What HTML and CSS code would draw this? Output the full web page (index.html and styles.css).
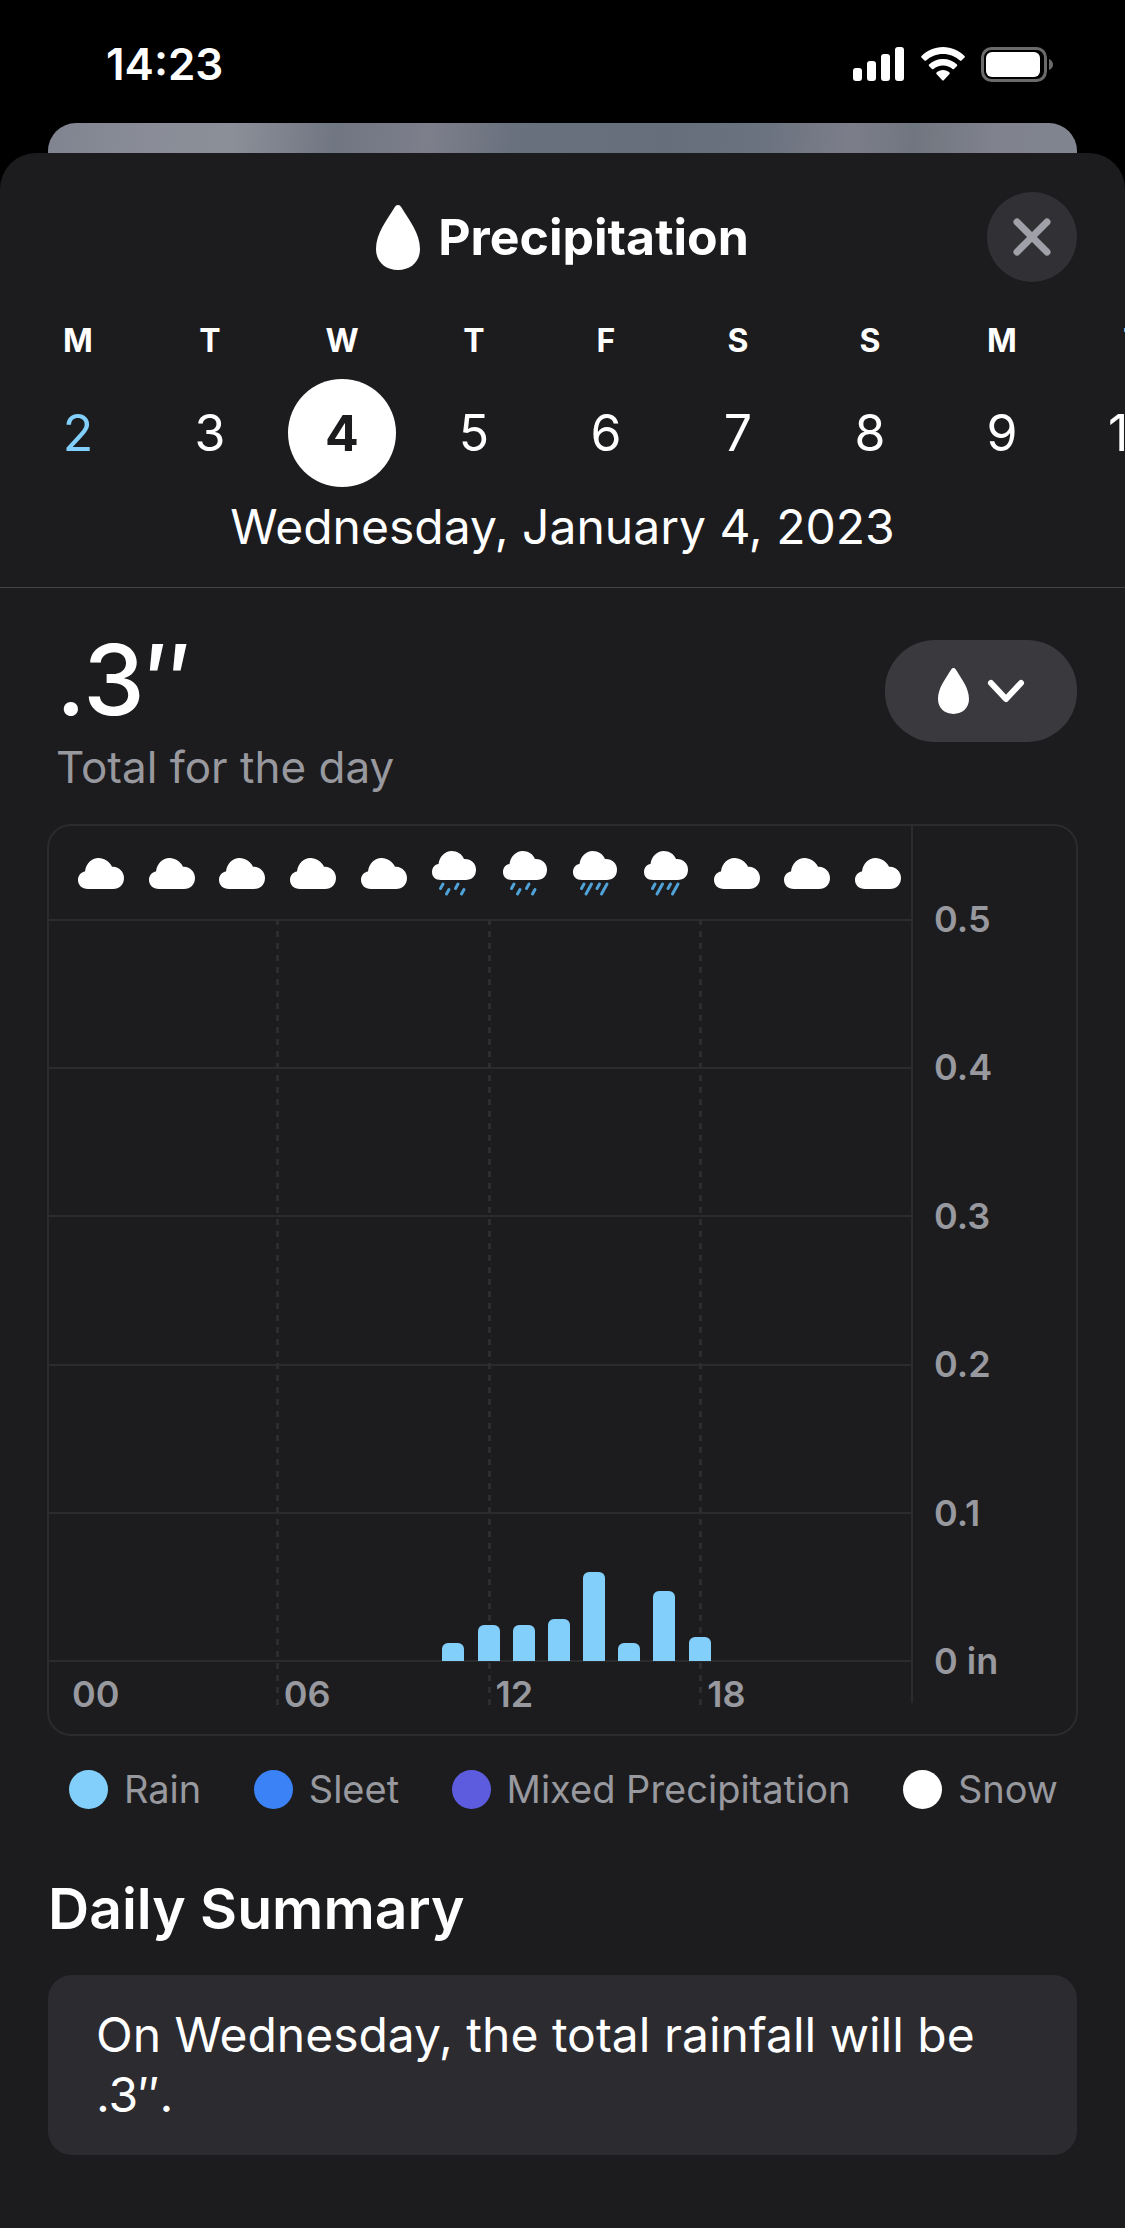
FILE: index.html
```html
<!DOCTYPE html>
<html lang="en">
<head>
    <meta charset="UTF-8">
    <meta name="viewport" content="width=device-width, initial-scale=1.0">
    <title>Precipitation</title>
    <link rel="stylesheet" href="styles.css">
</head>
<body>

<!-- shared icon shapes -->
<svg class="icon-defs" width="0" height="0" aria-hidden="true">
    <symbol id="drop" viewBox="0 0 44 65">
        <path d="M22 0 C23.500 0 24.500 0.800 25.500 2.500 C33 15 44 28 44 44 C44 56.500 35 65 22 65 C9 65 0 56.500 0 44 C0 28 11 15 18.500 2.500 C19.500 0.800 20.500 0 22 0 Z"/>
    </symbol>
    <symbol id="cloud" viewBox="0 0 46 31">
        <path d="M10 31 C4 31 0 27 0 22 C0 17.500 3 14 7 13.500 C8 5.500 13.500 0 20.500 0 C26.500 0 31.500 3.500 34 8.700 C40.500 8 46 13.500 46 20 C46 26.500 41.500 31 35 31 Z"/>
    </symbol>
    <symbol id="rain" viewBox="0 0 46 46">
        <path class="cloud-shape" d="M10 29 C4 29 1 25.500 1 21 C1 16.500 4 13.500 7.500 13 C8.500 5.500 14 0 20.500 0 C26.500 0 31 3 33 8 C39.500 7.500 45 12 45 18.500 C45 25 41 29 34.500 29 Z"/>
        <path class="rain-shape" d="M12 33 L9.500 37.500 M18 38.500 L15.500 43 M27 33 L24.500 37.500 M33 38.500 L30.500 43"/>
    </symbol>
    <symbol id="heavy-rain" viewBox="0 0 46 46">
        <path class="cloud-shape" d="M10 29 C4 29 1 25.500 1 21 C1 16.500 4 13.500 7.500 13 C8.500 5.500 14 0 20.500 0 C26.500 0 31 3 33 8 C39.500 7.500 45 12 45 18.500 C45 25 41 29 34.500 29 Z"/>
        <path class="rain-shape" d="M12 33 L9.500 37.500 M19.500 33 L14 43 M27.500 33 L25 37.500 M35 33 L29.500 43"/>
    </symbol>
</svg>

<div class="status-bar">
    <span class="time">14:23</span>
    <div class="status-icons">
        <svg width="52" height="34" viewBox="0 0 52 34" aria-label="Signal">
            <rect x="0" y="21" width="9" height="13" rx="3"/>
            <rect x="14" y="14" width="9" height="20" rx="3"/>
            <rect x="28" y="7" width="9" height="27" rx="3"/>
            <rect x="42" y="0" width="9" height="34" rx="3"/>
        </svg>
        <svg width="44" height="34" viewBox="0 0 44 34" aria-label="Wi-Fi">
            <path d="M22 0 C30.500 0 38 3.500 43.500 9 Q44.300 9.800 43.500 10.600 L40.500 13.600 Q39.700 14.300 39 13.600 C34.500 9.500 28.500 7 22 7 C15.500 7 9.500 9.500 5 13.600 Q4.300 14.300 3.500 13.600 L0.500 10.600 Q-0.300 9.800 0.500 9 C6 3.500 13.500 0 22 0 Z"/>
            <path d="M22 12 C27.500 12 32.500 14 36 17.500 Q36.600 18.300 36 19 L33 22 Q32.300 22.700 31.500 22 C29 19.700 25.700 18.500 22 18.500 C18.300 18.500 15 19.700 12.500 22 Q11.700 22.700 11 22 L8 19 Q7.400 18.300 8 17.500 C11.500 14 16.500 12 22 12 Z"/>
            <path d="M22 23 C24.500 23 26.800 24 28.500 25.500 Q29 26.200 28.500 27 L22.700 33.300 Q22 34 21.300 33.300 L15.500 27 Q15 26.200 15.500 25.500 C17.200 24 19.500 23 22 23 Z"/>
        </svg>
        <svg width="72" height="35" viewBox="0 0 72 35" aria-label="Battery">
            <rect class="battery-case" x="1.500" y="1.500" width="63" height="32" rx="9"/>
            <rect x="5" y="5" width="54" height="25" rx="6"/>
            <path class="battery-tip" d="M68 12 Q72 14 72 17.500 Q72 21 68 23 Z"/>
        </svg>
    </div>
</div>

<div class="back-card"></div>

<main class="sheet">
    <header class="sheet-header">
        <h1>
            <svg width="44" height="65" aria-hidden="true"><use href="#drop"/></svg>
            Precipitation
        </h1>
        <button class="close" aria-label="Close">
            <svg width="38" height="38" viewBox="0 0 38 38"><path d="M4 4 L34 34 M34 4 L4 34"/></svg>
        </button>
    </header>

    <nav class="days">
        <button class="day today"><span>M</span><b>2</b></button>
        <button class="day"><span>T</span><b>3</b></button>
        <button class="day selected"><span>W</span><b>4</b></button>
        <button class="day"><span>T</span><b>5</b></button>
        <button class="day"><span>F</span><b>6</b></button>
        <button class="day"><span>S</span><b>7</b></button>
        <button class="day"><span>S</span><b>8</b></button>
        <button class="day"><span>M</span><b>9</b></button>
        <button class="day"><span>T</span><b>10</b></button>
    </nav>
    <p class="date">Wednesday, January 4, 2023</p>

    <section class="content">
        <div class="total">
            <div>
                <p class="amount">.3″</p>
                <p class="caption">Total for the day</p>
            </div>
            <button class="picker" aria-label="Choose condition" aria-haspopup="listbox">
                <svg width="31" height="46" viewBox="0 0 44 65"><use href="#drop"/></svg>
                <svg class="chevron" width="38" height="24" viewBox="0 0 38 24"><path d="M4 4 L19 20 L34 4"/></svg>
            </button>
        </div>

        <div class="chart">
            <div class="plot">
                <div class="conditions">
                    <svg width="46" height="31"><use href="#cloud"/></svg>
                    <svg width="46" height="31"><use href="#cloud"/></svg>
                    <svg width="46" height="31"><use href="#cloud"/></svg>
                    <svg width="46" height="31"><use href="#cloud"/></svg>
                    <svg width="46" height="31"><use href="#cloud"/></svg>
                    <svg width="46" height="46"><use href="#rain"/></svg>
                    <svg width="46" height="46"><use href="#rain"/></svg>
                    <svg width="46" height="46"><use href="#heavy-rain"/></svg>
                    <svg width="46" height="46"><use href="#heavy-rain"/></svg>
                    <svg width="46" height="31"><use href="#cloud"/></svg>
                    <svg width="46" height="31"><use href="#cloud"/></svg>
                    <svg width="46" height="31"><use href="#cloud"/></svg>
                </div>
                <div class="graph">
                    <div class="lines">
                        <div></div>
                        <div></div>
                        <div></div>
                        <div></div>
                        <div></div>
                    </div>
                    <div class="hours">
                        <span>00</span>
                        <span>06</span>
                        <span>12</span>
                        <span>18</span>
                    </div>
                    <div class="bars" id="bars"></div>
                </div>
            </div>
            <div class="scale">
                <span>0.5</span>
                <span>0.4</span>
                <span>0.3</span>
                <span>0.2</span>
                <span>0.1</span>
                <span>0 in</span>
            </div>
        </div>

        <ul class="legend">
            <li class="rain">Rain</li>
            <li class="sleet">Sleet</li>
            <li class="mixed">Mixed Precipitation</li>
            <li class="snow">Snow</li>
        </ul>

        <h2>Daily Summary</h2>
        <p class="summary">On Wednesday, the total rainfall will be .3″.</p>
    </section>
</main>

<script>
    // inches of rain for each hour of the day
    var rain = [0, 0, 0, 0, 0, 0, 0, 0, 0, 0, 0, 0.012, 0.024, 0.024, 0.028, 0.06, 0.012, 0.0475, 0.016, 0, 0, 0, 0, 0];
    var max = 0.5;
    var bars = document.getElementById("bars");

    rain.forEach(function (value) {
        var bar = document.createElement("div");
        bar.className = "bar";
        bar.style.height = (value / max * 100) + "%";
        bars.appendChild(bar);
    });
</script>

</body>
</html>
```
FILE: styles.css
```css
* {
    box-sizing: border-box;
}

body {
    margin: 0;
    min-height: 100vh;
    display: flex;
    flex-direction: column;
    overflow-x: hidden;
    background-color: #000;
    color: #fff;
    font-family: Inter, "Liberation Sans", sans-serif;
}

h1, h2, p, ul {
    margin: 0;
    padding: 0;
}

button {
    border: none;
    padding: 0;
    background: none;
    color: inherit;
    font-family: inherit;
    cursor: pointer;
}

svg {
    display: block;
    flex: none;
    fill: #fff;
}

.icon-defs {
    position: absolute;
}

/* status bar */
.status-bar {
    height: 123px;
    padding: 5px 72px 0 106px;
    display: flex;
    justify-content: space-between;
    align-items: center;
}

.time {
    font-size: 44px;
    font-weight: 600;
}

.status-icons {
    display: flex;
    align-items: center;
    gap: 16px;
}

.battery-case {
    fill: none;
    stroke: #6b6b6b;
    stroke-width: 3;
}

.battery-tip {
    fill: #6b6b6b;
}

.back-card {
    height: 30px;
    margin: 0 48px;
    border-radius: 28px 28px 0 0;
    background: linear-gradient(95deg, #808490, #8a8d97 10%, #8b8f98 18%, #707682 28%, #7d7f8b 37%, #6a717e 45%, #666d7b 60%, #6c7380 70%, #7c7e8a 78%, #70767f 84%, #80828d 92%, #80858f);
}

.sheet {
    flex: 1;
    padding-top: 39px;
    border-radius: 36px 36px 0 0;
    background-color: #1c1c1e;
}

.sheet-header {
    display: grid;
    grid-template-columns: 90px 1fr 90px;
    align-items: center;
    padding: 0 48px;
}

.sheet-header h1 {
    grid-column: 2;
    display: flex;
    justify-content: center;
    align-items: center;
    gap: 18px;
    font-size: 50px;
    font-weight: 700;
}

.close {
    width: 90px;
    height: 90px;
    border-radius: 50%;
    background-color: #313135;
    display: flex;
    align-items: center;
    justify-content: center;
}

.close svg {
    stroke: #a0a0a8;
    stroke-width: 7;
    stroke-linecap: round;
}

/* day strip */
.days {
    display: flex;
    overflow: hidden;
    margin-top: 39px;
    padding-left: 12px;
}

.day {
    flex: 0 0 132px;
    display: flex;
    flex-direction: column;
    align-items: center;
    gap: 18px;
}

.day span {
    font-size: 32px;
    line-height: 40px;
    font-weight: 700;
}

.day b {
    width: 108px;
    font-size: 50px;
    line-height: 108px;
    font-weight: 400;
    border-radius: 50%;
}

.today b {
    color: #81cffa;
}

.selected b {
    background-color: #fff;
    color: #1c1c1e;
    font-weight: 700;
}

.date {
    padding: 10px 0 30px;
    border-bottom: 1px solid #444447;
    font-size: 48px;
    line-height: 60px;
    text-align: center;
}

.content {
    padding: 40px 48px 72px;
}

/* total and picker */
.total {
    display: flex;
    justify-content: space-between;
    align-items: flex-start;
    padding-left: 8px;
}

.amount {
    font-size: 98px;
    line-height: 104px;
    font-weight: 500;
}

.caption {
    margin-top: 9px;
    font-size: 44px;
    line-height: 52px;
    color: #98989f;
}

.picker {
    width: 192px;
    height: 102px;
    margin-top: 12px;
    border-radius: 50px;
    background-color: #3a393d;
    display: flex;
    align-items: center;
    justify-content: center;
    gap: 18px;
}

.chevron {
    fill: none;
    stroke: #fff;
    stroke-width: 6;
    stroke-linecap: round;
    stroke-linejoin: round;
}

/* chart */
.chart {
    display: grid;
    grid-template-columns: 1fr 163px;
    margin: 31px -1px 0;
    padding-bottom: 18px;
    border: 2px solid #2b2b2e;
    border-radius: 24px;
    color: #98989f;
    font-size: 36px;
    line-height: 44px;
    font-weight: 600;
}

.plot {
    background: linear-gradient(#2b2b2e, #2b2b2e) no-repeat right top / 2px 877px;
}

.conditions {
    height: 93px;
    padding: 25px 0 0 17px;
    display: grid;
    grid-template-columns: repeat(12, 1fr);
    justify-items: center;
}

.conditions svg[height="31"] {
    margin-top: 7px;
}

.cloud-shape {
    fill: #fff;
}

.rain-shape {
    fill: none;
    stroke: #4fa3d9;
    stroke-width: 3;
    stroke-linecap: round;
}

/* grid lines, hours and bars lie on top of each other */
.graph {
    display: grid;
}

.lines, .hours, .bars {
    grid-area: 1 / 1;
}

.lines {
    height: 743px;
    display: flex;
    flex-direction: column;
    border-bottom: 2px solid #2b2b2e;
}

.lines div {
    flex: 1;
    border-top: 2px solid #2b2b2e;
}

.hours {
    height: 797px;
    padding: 0 2px 0 15px;
    display: grid;
    grid-template-columns: repeat(4, 1fr);
    align-items: stretch;
}

.hours span {
    display: flex;
    align-items: flex-end;
    padding-left: 8px;
    background: repeating-linear-gradient(#2d2d30 0 6px, transparent 6px 12px) no-repeat left top / 3px 786px;
}

.hours span:first-child {
    background: none;
}

.bars {
    height: 742px;
    padding-right: 20px;
    display: grid;
    grid-template-columns: repeat(24, 1fr);
    align-items: end;
    justify-items: center;
}

.bar {
    width: 22px;
    border-radius: 6px 6px 0 0;
    background-color: #83cffc;
}

.scale {
    height: 786px;
    margin-top: 71px;
    padding-left: 21px;
    display: flex;
    flex-direction: column;
    justify-content: space-between;
}

.legend {
    display: flex;
    justify-content: space-between;
    margin-top: 29px;
    padding: 0 19px 0 21px;
    list-style: none;
    color: #98989f;
    font-size: 38px;
    line-height: 48px;
}

.legend li {
    display: flex;
    align-items: center;
    gap: 16px;
}

.legend li::before {
    content: "";
    width: 39px;
    height: 39px;
    border-radius: 50%;
}

.legend .rain::before {
    background-color: #83cffc;
}

.legend .sleet::before {
    background-color: #3c82f7;
}

.legend .mixed::before {
    background-color: #5e5cde;
}

.legend .snow::before {
    background-color: #fff;
}

h2 {
    margin: 60px 0 30px;
    font-size: 57px;
    line-height: 72px;
    font-weight: 600;
}

.summary {
    padding: 30px 48px;
    border-radius: 24px;
    background-color: #2c2b30;
    font-size: 48px;
    line-height: 60px;
}
```
